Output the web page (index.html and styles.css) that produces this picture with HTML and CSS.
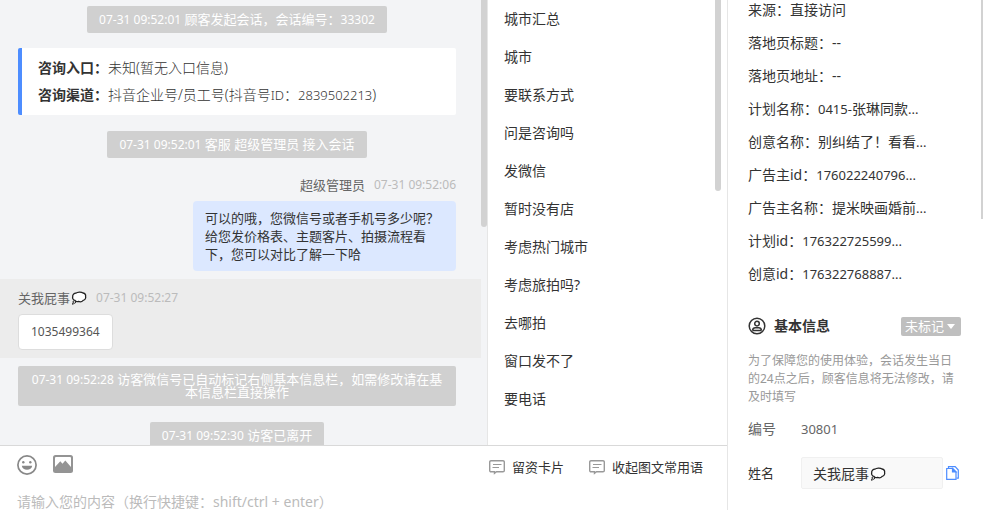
FILE: index.html
```html
<!DOCTYPE html>
<html lang="zh-CN">
<head>
<meta charset="utf-8">
<title>客服会话</title>
<link rel="stylesheet" href="styles.css">
</head>
<body>
<svg class="sprite" aria-hidden="true">
  <symbol id="thought" viewBox="0 0 16 14">
    <path d="M5 2.200C6.200.8 10.500.6 12 2c1.700.3 2.900 1.800 2.600 3.500.5 1.900-.7 3.500-2.400 3.900-1.200 1.300-3.200 1.600-4.600 1-1.400.5-3 .1-3.700-1C2.200 9 1.200 7.300 1.700 5.700 1.400 3.800 3 2.300 5 2.200Z" fill="#fff" stroke="#222" stroke-width="1.300"/>
    <circle cx="3.300" cy="11" r="1.300" fill="#fff" stroke="#222"/>
    <circle cx="1.800" cy="12.900" r=".8" fill="#222"/>
  </symbol>
  <symbol id="card" viewBox="0 0 18 16">
    <path d="M3 1.700h12a1.300 1.300 0 0 1 1.300 1.300v8.500a1.300 1.300 0 0 1-1.300 1.300H8.500L6.500 14.300V12.800H3a1.300 1.300 0 0 1-1.300-1.300V3A1.300 1.300 0 0 1 3 1.700Z" fill="none" stroke="#999" stroke-width="1.400"/>
    <path d="M5 5.500h8.500M4.500 8.500h6.500" stroke="#999" stroke-width="1.200"/>
  </symbol>
</svg>
<div class="app">
  <main class="main">
    <div class="upper">
      <section class="chat">
        <div class="messages">
          <p class="notice"><span class="num">07-31 09:52:01</span> 顾客发起会话，会话编号：<span class="num">33302</span></p>
          <div class="entry">
            <p><b>咨询入口：</b>未知(暂无入口信息)</p>
            <p><b>咨询渠道：</b>抖音企业号/员工号(抖音号<span class="num">ID</span>：<span class="num">2839502213</span>)</p>
          </div>
          <p class="notice"><span class="num">07-31 09:52:01</span> 客服 超级管理员 接入会话</p>
          <article class="message sent">
            <header><span>超级管理员</span><time>07-31 09:52:06</time></header>
            <p class="bubble">可以的哦，您微信号或者手机号多少呢？给您发价格表、主题客片、拍摄流程看下，您可以对比了解一下哈</p>
          </article>
          <article class="message received">
            <header><span class="name">关我屁事<svg class="thought"><use href="#thought"/></svg></span><time>07-31 09:52:27</time></header>
            <p class="bubble num">1035499364</p>
          </article>
          <p class="notice long"><span class="num">07-31 09:52:28</span> 访客微信号已自动标记右侧基本信息栏，如需修改请在基本信息栏直接操作</p>
          <p class="notice"><span class="num">07-31 09:52:30</span> 访客已离开</p>
        </div>
        <div class="track"><div class="thumb"></div></div>
      </section>
      <nav class="phrases">
        <ul>
          <li><a href="#">城市汇总</a></li>
          <li><a href="#">城市</a></li>
          <li><a href="#">要联系方式</a></li>
          <li><a href="#">问是咨询吗</a></li>
          <li><a href="#">发微信</a></li>
          <li><a href="#">暂时没有店</a></li>
          <li><a href="#">考虑热门城市</a></li>
          <li><a href="#">考虑旅拍吗?</a></li>
          <li><a href="#">去哪拍</a></li>
          <li><a href="#">窗口发不了</a></li>
          <li><a href="#">要电话</a></li>
        </ul>
        <div class="track"><div class="thumb"></div></div>
      </nav>
    </div>
    <section class="composer">
      <div class="toolbar">
        <button type="button" aria-label="表情">
          <svg width="20" height="20" viewBox="0 0 20 20"><circle cx="10" cy="10" r="9.100" fill="none" stroke="#888" stroke-width="1.700"/><circle cx="6.300" cy="7.300" r="1.200" fill="#888"/><circle cx="13.300" cy="7.300" r="1.200" fill="#888"/><path d="M4.800 10.800h10.400c-.4 5.200-10 5.200-10.400 0Z" fill="#888"/></svg>
        </button>
        <button type="button" aria-label="图片">
          <svg width="20" height="18" viewBox="0 0 20 18"><rect width="20" height="18" rx="2.500" fill="#949494"/><path d="M2 3a1 1 0 0 1 1-1h14a1 1 0 0 1 1 1v9l-5.700-6.500L9.500 8.800 7.300 6.300 2 12Z" fill="#fff"/></svg>
        </button>
        <span class="actions">
          <button type="button"><svg width="18" height="16"><use href="#card"/></svg>留资卡片</button>
          <button type="button"><svg width="18" height="16"><use href="#card"/></svg>收起图文常用语</button>
        </span>
      </div>
      <textarea rows="1" aria-label="消息内容" placeholder="请输入您的内容（换行快捷键：shift/ctrl + enter）"></textarea>
    </section>
  </main>
  <aside class="profile">
    <div class="details">
      <ul class="facts">
        <li>来源：直接访问</li>
        <li>落地页标题：--</li>
        <li>落地页地址：--</li>
        <li>计划名称：<span class="num">0415-</span>张琳同款<span class="num">...</span></li>
        <li>创意名称：别纠结了！看看<span class="num">...</span></li>
        <li>广告主id：<span class="num">176022240796...</span></li>
        <li>广告主名称：提米映画婚前<span class="num">...</span></li>
        <li>计划id：<span class="num">176322725599...</span></li>
        <li>创意id：<span class="num">176322768887...</span></li>
      </ul>
      <div class="heading">
        <svg width="18" height="18" viewBox="0 0 18 18" fill="none" stroke="#333" stroke-width="1.500"><circle cx="9" cy="9" r="7.800"/><circle cx="9" cy="6.600" r="2.300"/><path d="M4.500 13.400c.3-1.700 1.300-2.600 2.700-2.600h3.600c1.400 0 2.400.9 2.700 2.600M4.300 13.400h9.400"/></svg>
        <h2>基本信息</h2>
        <div class="mark">
          <select aria-label="标记"><option>未标记</option></select>
          <svg width="8" height="5" viewBox="0 0 8 5"><path d="M0 0h8L4 5Z" fill="#fff"/></svg>
        </div>
      </div>
      <p class="tip">为了保障您的使用体验，会话发生当日的24点之后，顾客信息将无法修改，请及时填写</p>
      <div class="field muted"><span class="label">编号</span><span class="num">30801</span></div>
      <div class="field">
        <label class="label" for="name">姓名</label>
        <div class="namebox"><input id="name" type="text" value="关我屁事"><svg class="thought"><use href="#thought"/></svg></div>
        <button type="button" class="copy" aria-label="复制">
          <svg width="13" height="14" viewBox="0 0 13 14" fill="none" stroke="#4d8dff" stroke-width="1.200"><path d="M2.500 2V.7h6.700L12.300 4v8.200H10.500"/><path d="M.7 2.500h6L10 6v7.300H.7Z"/><path d="M6.500 2.500V6H10Z" fill="#4d8dff"/></svg>
        </button>
      </div>
    </div>
    <div class="thumb"></div>
  </aside>
</div>
</body>
</html>
```

FILE: styles.css
```css
* { box-sizing: border-box; }

body {
  margin: 0;
  color: #333;
  background: #fff;
  font: 14px/20px "Noto Sans", "Noto Sans CJK SC", sans-serif;
}

p, ul, h2 { margin: 0; padding: 0; }
ul { list-style: none; }
a { color: inherit; text-decoration: none; }

button {
  display: flex;
  align-items: center;
  padding: 0;
  border: 0;
  background: none;
  color: inherit;
  font: inherit;
  cursor: pointer;
}

.sprite { position: absolute; width: 0; height: 0; }
.num { font-size: 13px; }
.thought { width: 16px; height: 14px; }

.app {
  display: flex;
  height: 100vh;
  overflow: hidden;
}

.main {
  flex: 1;
  min-width: 0;
  display: flex;
  flex-direction: column;
}

.upper { flex: 1; min-height: 0; display: flex; }

.track { width: 6px; flex: none; }
.thumb { background: #d2d2d2; border-radius: 0 0 3px 3px; }

/* Conversation */
.chat {
  flex: 1;
  min-width: 0;
  display: flex;
  overflow: hidden;
  background: #f3f4f6;
}
.chat .thumb { height: 51%; }

.messages {
  flex: 1;
  display: flex;
  flex-direction: column;
  align-items: center;
  padding-top: 6px;
}

.notice {
  flex: none;
  margin: 0 25px 15px 18px;
  padding: 7px 12px;
  border-radius: 2px;
  background: #d0d0d0;
  color: #fff;
  font-size: 13px;
  line-height: 13px;
  text-align: center;
}
.notice .num { font-size: 12px; }
.notice.long { margin: 8px 25px 16px 18px; }

.entry {
  align-self: stretch;
  margin: 0 25px 16px 18px;
  padding: 6px 16px 7px;
  border-left: 4px solid #4d8dff;
  border-radius: 2px;
  background: #fff;
  font-weight: 300;
}
.entry p { height: 27px; line-height: 27px; }
.entry b { font-weight: 600; }

.message { align-self: stretch; font-size: 13px; line-height: 18px; }
.message header {
  display: flex;
  gap: 9px;
  height: 18px;
  margin-bottom: 7px;
  color: #666;
}
.message time { color: #bbb; font-size: 12px; }
.name { display: flex; align-items: center; gap: 1px; }

.sent {
  display: flex;
  flex-direction: column;
  align-items: flex-end;
  margin-top: 3px;
  padding: 0 25px 8px 193px;
}
.sent .bubble {
  padding: 8px 12px;
  border-radius: 4px;
  background: #dce8ff;
}

.received {
  padding: 10px 18px 8px;
  background: #ececec;
}
.received .bubble {
  width: fit-content;
  padding: 8px 12px;
  border: 1px solid #ddd;
  border-radius: 4px;
  background: #fff;
  color: #555;
  font-size: 12px;
}

/* Quick phrases */
.phrases {
  width: 240px;
  display: flex;
  justify-content: space-between;
  padding: 0 6px 0 16px;
  border-left: 1px solid #e6e6e6;
  overflow: hidden;
}
.phrases .thumb { height: 43%; }
.phrases a { display: block; line-height: 38px; }

/* Composer */
.composer {
  padding: 6px 17px 0;
  border-top: 1px solid #d9d9d9;
}
.toolbar {
  display: flex;
  align-items: center;
  gap: 16px;
  height: 24px;
  font-size: 13px;
}
.toolbar > button:first-child { margin-top: 2px; }
.actions { display: flex; gap: 24px; margin: 6px 7px 0 auto; }
.actions button { gap: 6px; }
textarea {
  display: block;
  width: 100%;
  height: 20px;
  margin-top: 16px;
  padding: 0;
  border: 0;
  outline: 0;
  resize: none;
  overflow: hidden;
  background: none;
  color: #333;
  font: inherit;
}
textarea::placeholder { color: #bbb; }

.composer textarea { margin-bottom: -2px; }

/* Visitor profile */
.profile {
  width: 256px;
  flex: none;
  display: flex;
  border-left: 1px solid #e6e6e6;
}
.profile > .thumb { width: 2px; height: 43%; border-radius: 0; }
.details { flex: 1; padding: 0 20px; }

.facts { display: grid; gap: 13px; }

.heading {
  display: flex;
  align-items: center;
  gap: 8px;
  margin: 32px 0 16px;
}
h2 { font-size: 14px; font-weight: 600; }
.mark { position: relative; display: flex; margin-left: auto; }
.mark select {
  width: 60px;
  height: 19px;
  padding: 0 4px;
  border: 0;
  border-radius: 2px;
  appearance: none;
  background: #bfbfbf;
  color: #fff;
  font: inherit;
  font-size: 13px;
  line-height: 19px;
}
.mark svg { position: absolute; top: 7px; right: 6px; pointer-events: none; }

.tip {
  margin-right: 4px;
  color: #999;
  font-size: 12px;
  line-height: 18px;
}

.field { display: flex; align-items: center; margin-top: 18px; }
.muted { margin-top: 13px; color: #666; }
.label { width: 53px; font-size: 13px; }
.muted .label { font-size: 14px; }
.namebox { position: relative; flex: 1; }
.namebox input {
  display: block;
  width: 100%;
  height: 32px;
  padding: 0 11px;
  border: 1px solid #f0f0f0;
  border-radius: 2px;
  outline: 0;
  background: #f9f9f9;
  color: #333;
  font: inherit;
}
.namebox .thought { position: absolute; left: 69px; top: 10px; }
.copy { margin: 0 2px 0 3px; }
```
